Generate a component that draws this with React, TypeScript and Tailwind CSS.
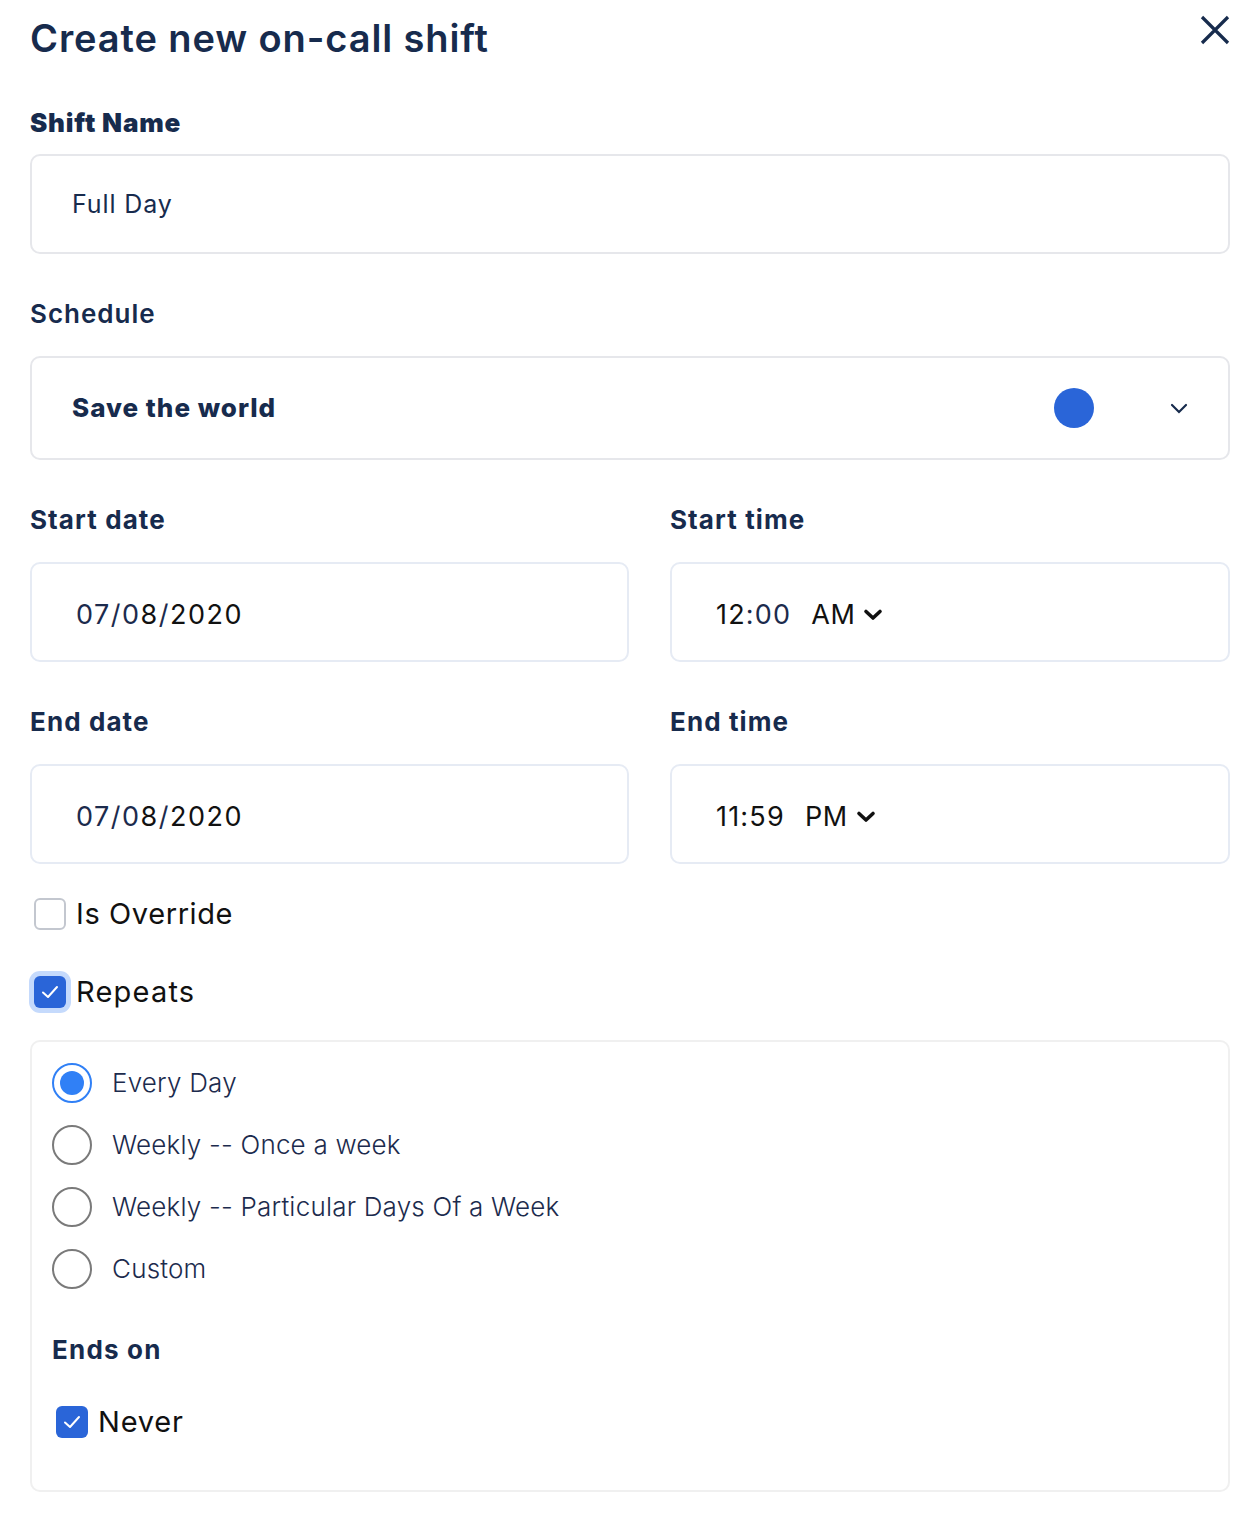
import React from "react";

const navy = "text-[#172b4d]";

function Check({ ring }: { ring?: boolean }) {
  return (
    <span
      className={
        "flex h-[32px] w-[32px] shrink-0 items-center justify-center rounded-[6px] bg-[#2a65d8] " +
        (ring ? "ring-[5px] ring-[#c5dafc]" : "")
      }
    >
      <svg width="20" height="16" viewBox="0 0 20 16" fill="none">
        <path d="M3 8.5 L8 13 L17 3" stroke="white" strokeWidth="2" strokeLinecap="round" strokeLinejoin="round" />
      </svg>
    </span>
  );
}

function Radio({ selected, label }: { selected?: boolean; label: string }) {
  return (
    <div className="flex items-center gap-[20px]">
      {selected ? (
        <span className="flex h-[40px] w-[40px] items-center justify-center rounded-full border-[2px] border-[#3080f6] bg-white">
          <span className="h-[24px] w-[24px] rounded-full bg-[#3080f6]" />
        </span>
      ) : (
        <span className="h-[40px] w-[40px] rounded-full border-[2px] border-[#7a7a7a] bg-white" />
      )}
      <span className="text-[26px] font-light leading-[32px] tracking-[0.2px] text-[#1c2b4d]">{label}</span>
    </div>
  );
}

function TimeChevron() {
  return (
    <svg width="20" height="13" viewBox="0 0 20 13" fill="none">
      <path d="M3 3.5 L10 10 L17 3.5" stroke="#111" strokeWidth="3.6" strokeLinecap="round" strokeLinejoin="round" />
    </svg>
  );
}

export default function App() {
  return (
    <div className="min-h-[1518px] w-full bg-white pl-[30px] pr-[26px] font-['Inter','Noto_Sans',sans-serif]">
      {/* Header */}
      <div className="flex items-start justify-between pt-[15px]">
        <h1 className={"text-[38px] font-semibold leading-[46px] tracking-[0.9px] " + navy}>Create new on-call shift</h1>
        <svg width="30" height="30" viewBox="0 0 30 30" fill="none">
          <path d="M2 2 L28 28 M28 2 L2 28" stroke="#172b4d" strokeWidth="3.2" />
        </svg>
      </div>

      {/* Shift name */}
      <div className={"mt-[46px] text-[26px] font-black leading-[32px] tracking-[0.8px] " + navy}>Shift Name</div>
      <div className="mt-[15px] flex h-[100px] items-center rounded-[10px] border-[2px] border-[#e6e7eb] pl-[40px]">
        <span className={"text-[25px] leading-[32px] tracking-[0.9px] " + navy}>Full Day</span>
      </div>

      {/* Schedule */}
      <div className={"mt-[44px] text-[26px] font-semibold leading-[32px] tracking-[1px] " + navy}>Schedule</div>
      <div className="mt-[26px] flex h-[104px] items-center rounded-[10px] border-[2px] border-[#e6e7eb] pl-[40px] pr-[40px]">
        <span className={"flex-1 text-[26px] font-extrabold leading-[32px] tracking-[1px] " + navy}>Save the world</span>
        <span className="h-[40px] w-[40px] rounded-full bg-[#2a65d8]" />
        <svg className="ml-[76px]" width="18" height="12" viewBox="0 0 18 12" fill="none">
          <path d="M2 3 L9 10 L16 3" stroke="#172b4d" strokeWidth="2.2" strokeLinecap="round" />
        </svg>
      </div>

      {/* Start */}
      <div className="mt-[44px] grid grid-cols-[599px_1fr] gap-x-[41px]">
        <div>
          <div className={"text-[26px] font-bold leading-[32px] tracking-[1.1px] " + navy}>Start date</div>
          <div className="mt-[26px] flex h-[100px] items-center rounded-[10px] border-[2px] border-[#e6ebf4] pl-[44px] pt-[5px]">
            <span className="text-[27px] leading-[32px] tracking-[1.5px] text-[#111]">
              <span className="text-[#1c2b4d]">07/0</span>8<span className="text-[#1c2b4d]">/</span>2020
            </span>
          </div>
        </div>
        <div>
          <div className={"text-[26px] font-bold leading-[32px] tracking-[1.1px] " + navy}>Start time</div>
          <div className="mt-[26px] flex h-[100px] items-center rounded-[10px] border-[2px] border-[#e6ebf4] pl-[44px] pt-[5px]">
            <span className="text-[27px] leading-[32px] tracking-[1.2px] text-[#111]">
              12<span className="text-[#1c2b4d]">:00</span>
            </span>
            <span className="ml-[20px] text-[27px] leading-[32px] tracking-[0.5px] text-[#111]">AM</span>
            <span className="ml-[8px]"><TimeChevron /></span>
          </div>
        </div>
      </div>

      {/* End */}
      <div className="mt-[44px] grid grid-cols-[599px_1fr] gap-x-[41px]">
        <div>
          <div className={"text-[26px] font-bold leading-[32px] tracking-[1.1px] " + navy}>End date</div>
          <div className="mt-[26px] flex h-[100px] items-center rounded-[10px] border-[2px] border-[#e6ebf4] pl-[44px] pt-[5px]">
            <span className="text-[27px] leading-[32px] tracking-[1.5px] text-[#111]">
              <span className="text-[#1c2b4d]">07/0</span>8<span className="text-[#1c2b4d]">/</span>2020
            </span>
          </div>
        </div>
        <div>
          <div className={"text-[26px] font-bold leading-[32px] tracking-[1.1px] " + navy}>End time</div>
          <div className="mt-[26px] flex h-[100px] items-center rounded-[10px] border-[2px] border-[#e6ebf4] pl-[44px] pt-[5px]">
            <span className="text-[27px] leading-[32px] tracking-[1.2px] text-[#111]">11:59</span>
            <span className="ml-[20px] text-[27px] leading-[32px] tracking-[0.5px] text-[#111]">PM</span>
            <span className="ml-[8px]"><TimeChevron /></span>
          </div>
        </div>
      </div>

      {/* Is Override */}
      <div className="ml-[4px] mt-[34px] flex items-center gap-[10px]">
        <span className="h-[32px] w-[32px] rounded-[6px] border-[2px] border-[#c3c7cf] bg-white" />
        <span className="text-[29px] leading-[32px] tracking-[0.6px] text-[#111]">Is Override</span>
      </div>

      {/* Repeats */}
      <div className="ml-[4px] mt-[46px] flex items-center gap-[10px]">
        <Check ring />
        <span className="text-[29px] leading-[32px] tracking-[1.2px] text-[#111]">Repeats</span>
      </div>

      {/* Repeat options */}
      <div className="mt-[32px] rounded-[10px] border-[2px] border-[#f0f0f0] px-[20px] pb-[52px] pt-[21px]">
        <div className="flex flex-col gap-[22px]">
          <Radio selected label="Every Day" />
          <Radio label="Weekly -- Once a week" />
          <Radio label="Weekly -- Particular Days Of a Week" />
          <Radio label="Custom" />
        </div>
        <div className={"mt-[45px] text-[26px] font-bold leading-[32px] tracking-[1.2px] " + navy}>Ends on</div>
        <div className="ml-[4px] mt-[40px] flex items-center gap-[10px]">
          <Check />
          <span className="text-[29px] leading-[32px] tracking-[0.8px] text-[#111]">Never</span>
        </div>
      </div>
    </div>
  );
}
